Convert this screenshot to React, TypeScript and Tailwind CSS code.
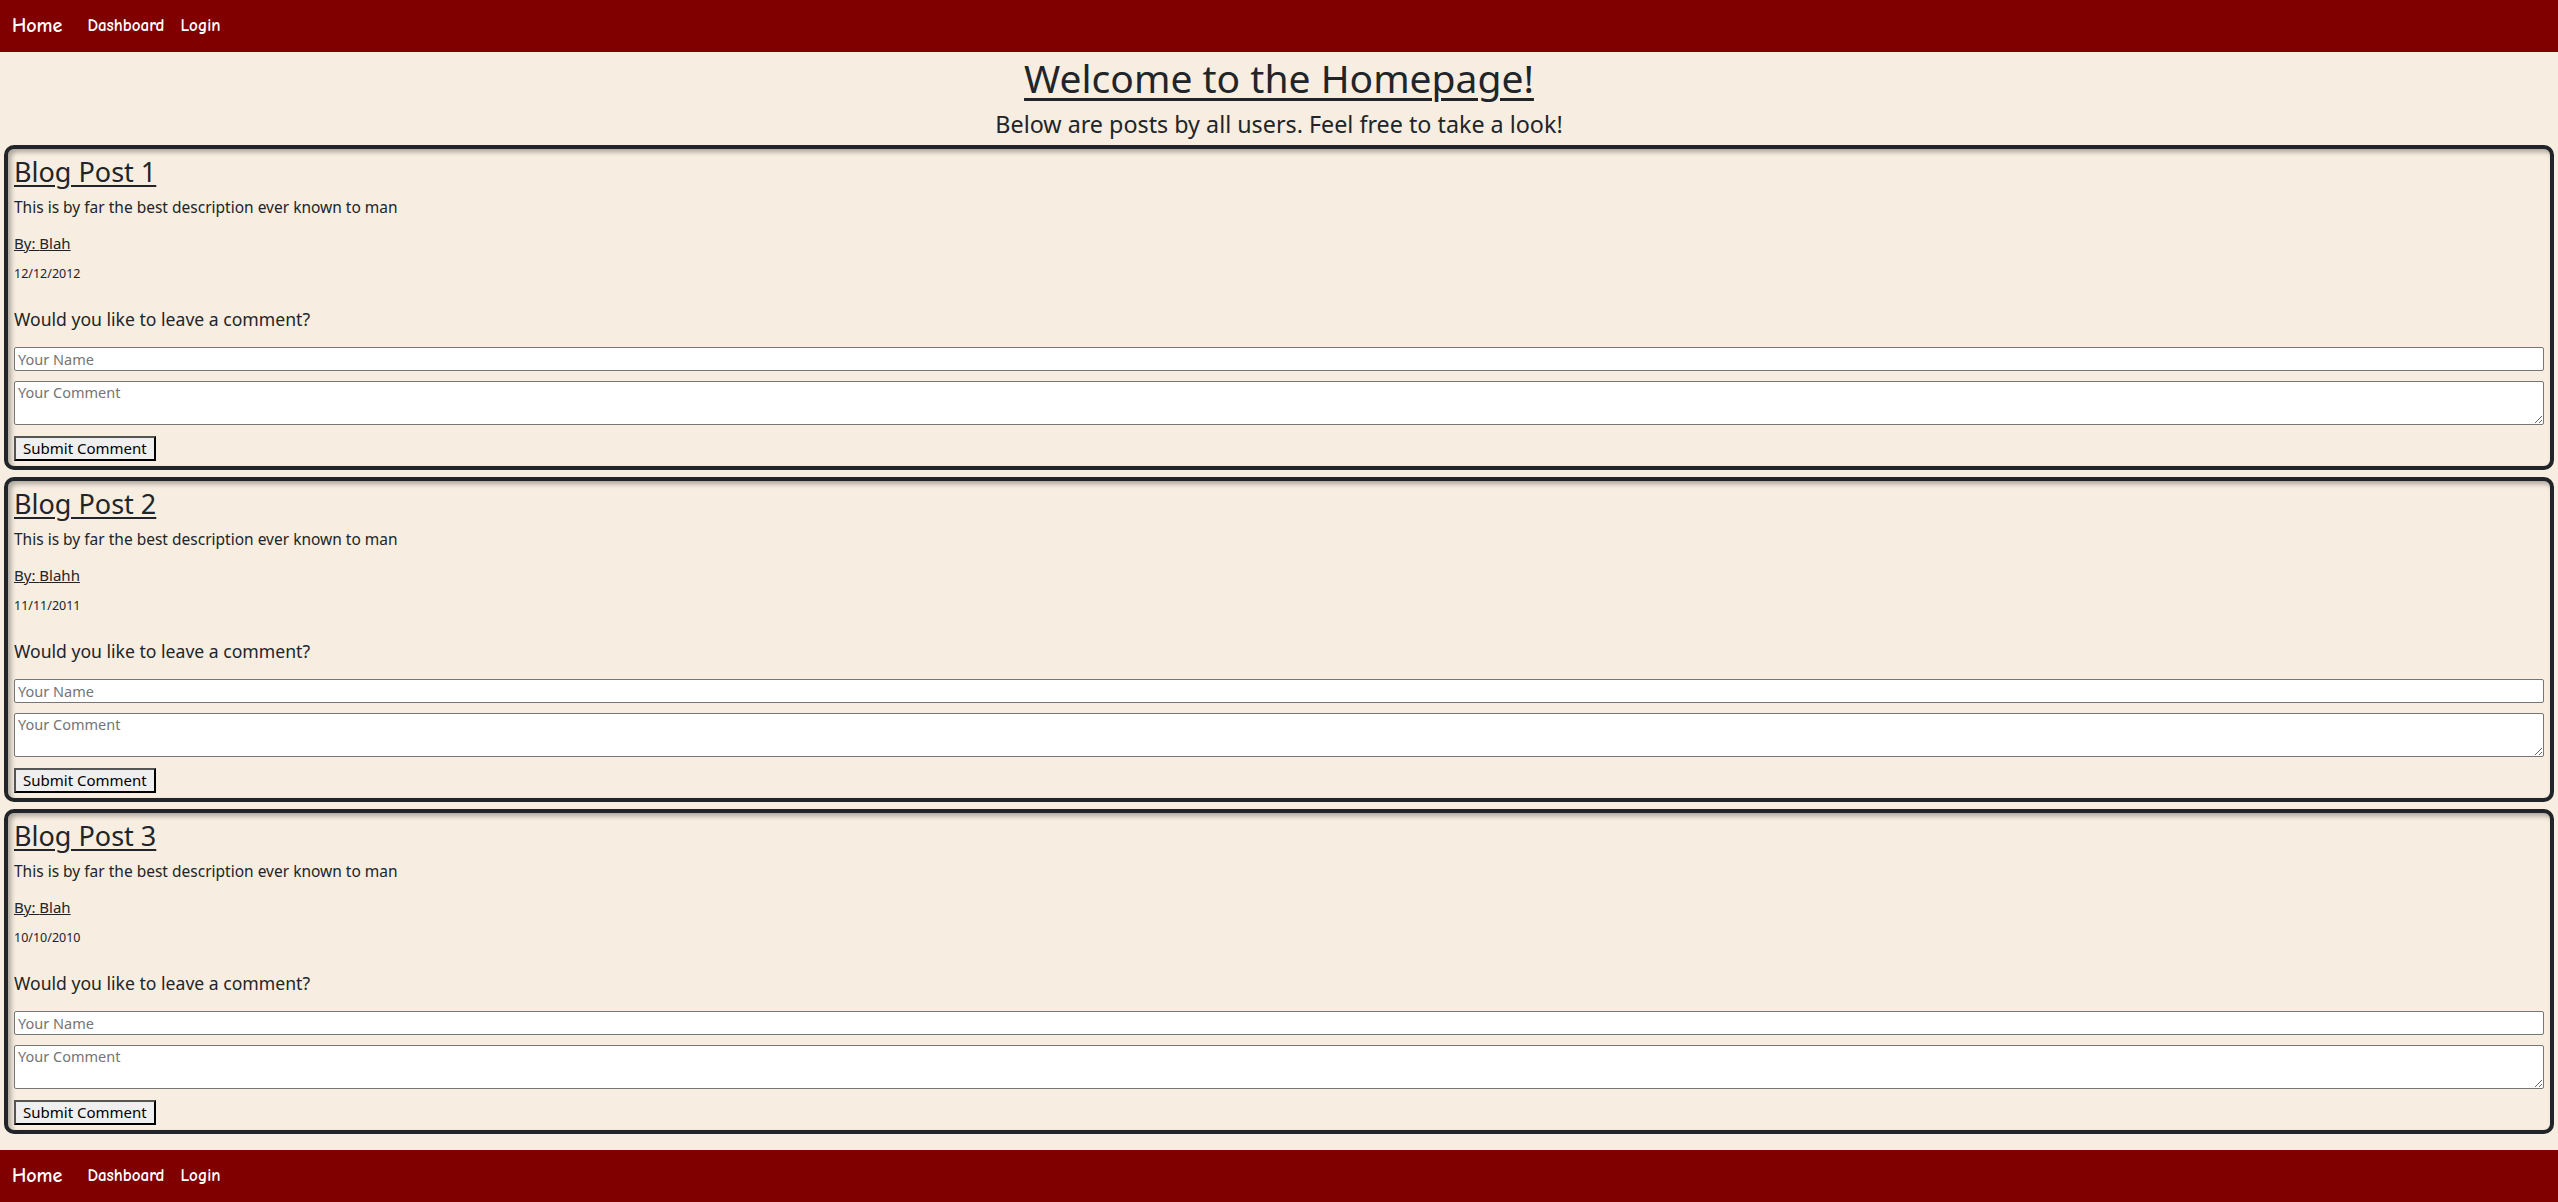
const POSTS = [
  { id: 1, title: 'Blog Post 1', author: 'Blah', date: '12/12/2012' },
  { id: 2, title: 'Blog Post 2', author: 'Blahh', date: '11/11/2011' },
  { id: 3, title: 'Blog Post 3', author: 'Blah', date: '10/10/2010' },
];

const NavBar = () => (
  <nav className="h-[52px] bg-[#800000] flex items-center px-[12px] text-white font-semibold font-['Comic_Sans_MS','Comic_Neue',cursive]">
    <a href="#" className="text-[20px] mr-[25px]">Home</a>
    <a href="#" className="text-[17px] mr-[16px]">Dashboard</a>
    <a href="#" className="text-[17px]">Login</a>
  </nav>
);

const PostCard = ({ title, author, date }: { title: string; author: string; date: string }) => (
  <div className="border-4 border-[#212529] rounded-[10px] shadow-[inset_3px_3px_5px_rgba(0,0,0,0.3)] px-[6px] pt-[6px] pb-[5px] flex flex-col">
    <h2 className="text-[27px] leading-[34px] underline underline-offset-[3px] decoration-[2px]">{title}</h2>
    <p className="text-[15.5px] leading-[22px] mt-[7px]">This is by far the best description ever known to man</p>
    <a href="#" className="text-[15px] leading-[22px] mt-[14px] underline self-start">By: {author}</a>
    <p className="text-[12.5px] leading-[20px] mt-[10px]">{date}</p>
    <h5 className="text-[17.6px] leading-[26px] mt-[22px]">Would you like to leave a comment?</h5>
    <input
      type="text"
      placeholder="Your Name"
      className="mt-[15px] h-[24px] w-full bg-white border border-[#767676] rounded-[2px] px-[3px] text-[14.5px] placeholder:text-[#757575] outline-none"
    />
    <textarea
      placeholder="Your Comment"
      className="mt-[10px] h-[44px] w-full bg-white border border-[#767676] rounded-[2px] px-[3px] py-[1px] text-[14.5px] leading-[18px] placeholder:text-[#757575] outline-none"
    />
    <button className="mt-[11px] h-[25px] self-start bg-[#efefef] border-2 border-t-[#555] border-l-[#555] border-b-black border-r-black px-[7px] text-[15px] leading-[19px] text-black">
      Submit Comment
    </button>
  </div>
);

export default function App() {
  return (
    <div className="min-h-screen bg-[#f7ede0] text-[#212529] font-['Noto_Sans',sans-serif]">
      <NavBar />

      {/* Page header */}
      <header className="text-center mt-[2px]">
        <h1 className="text-[39px] leading-[48px] underline underline-offset-[5px] decoration-[3px]">Welcome to the Homepage!</h1>
        <h4 className="text-[23.3px] leading-[28px] mt-[8px]">Below are posts by all users. Feel free to take a look!</h4>
      </header>

      {/* Posts */}
      <main className="px-[4px] pt-[7px] pb-[16px] flex flex-col gap-[7px]">
        {POSTS.map((p) => (
          <PostCard key={p.id} title={p.title} author={p.author} date={p.date} />
        ))}
      </main>

      <NavBar />
    </div>
  );
}
